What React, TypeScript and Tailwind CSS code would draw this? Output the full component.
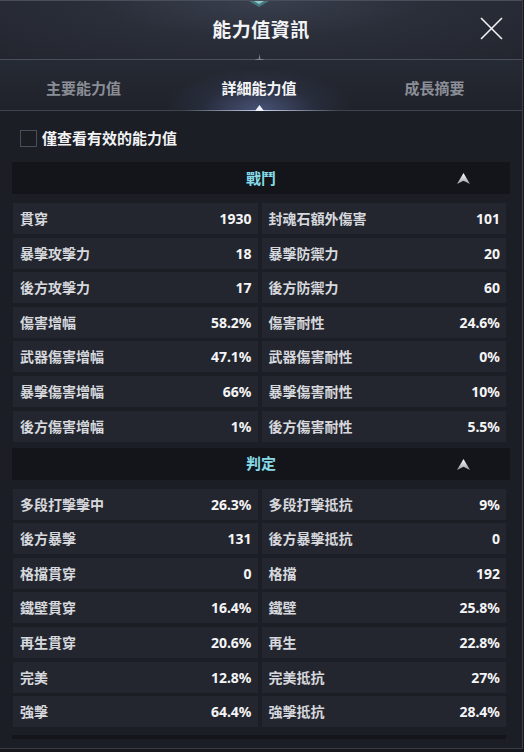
import React from "react";

const combat: [string, string, string, string][] = [
  ["貫穿", "1930", "封魂石額外傷害", "101"],
  ["暴擊攻擊力", "18", "暴擊防禦力", "20"],
  ["後方攻擊力", "17", "後方防禦力", "60"],
  ["傷害增幅", "58.2%", "傷害耐性", "24.6%"],
  ["武器傷害增幅", "47.1%", "武器傷害耐性", "0%"],
  ["暴擊傷害增幅", "66%", "暴擊傷害耐性", "10%"],
  ["後方傷害增幅", "1%", "後方傷害耐性", "5.5%"],
];

const judge: [string, string, string, string][] = [
  ["多段打擊擊中", "26.3%", "多段打擊抵抗", "9%"],
  ["後方暴擊", "131", "後方暴擊抵抗", "0"],
  ["格擋貫穿", "0", "格擋", "192"],
  ["鐵壁貫穿", "16.4%", "鐵壁", "25.8%"],
  ["再生貫穿", "20.6%", "再生", "22.8%"],
  ["完美", "12.8%", "完美抵抗", "27%"],
  ["強擊", "64.4%", "強擊抵抗", "28.4%"],
];

function CollapseArrow() {
  return (
    <svg width="13" height="11" viewBox="0 0 13 11">
      <defs>
        <linearGradient id="arr" x1="0" y1="0" x2="0" y2="1">
          <stop offset="0" stopColor="#ffffff" />
          <stop offset="1" stopColor="#9a9ea8" />
        </linearGradient>
      </defs>
      <path d="M6.5 0 L13 11 L6.5 7.8 L0 11 Z" fill="url(#arr)" />
    </svg>
  );
}

function StatCell({ label, value }: { label: string; value: string }) {
  return (
    <div className="h-[31px] bg-[#23262e] flex items-center justify-between pl-[7px] pr-[6px]">
      <span className="text-[14px] text-[#d6d8dd] font-semibold">{label}</span>
      <span className="text-[14px] text-[#f5f5f7] font-bold">{value}</span>
    </div>
  );
}

function Section({ title, rows }: { title: string; rows: [string, string, string, string][] }) {
  return (
    <>
      <div className="relative h-[32px] bg-[#13151b] flex items-center justify-center">
        <span className="text-[15px] font-bold text-[#86dbe6]">{title}</span>
        <div className="absolute left-[445px] top-[11px]">
          <CollapseArrow />
        </div>
      </div>
      <div className="mt-[9px] ml-[1px] w-[493px] grid grid-cols-2 gap-x-[4px] gap-y-[3.6px]">
        {rows.map((r) => (
          <React.Fragment key={r[0]}>
            <StatCell label={r[0]} value={r[1]} />
            <StatCell label={r[2]} value={r[3]} />
          </React.Fragment>
        ))}
      </div>
    </>
  );
}

export default function App() {
  return (
    <div
      className="w-[524px] h-[752px] overflow-hidden bg-[#15171c]"
      style={{ fontFamily: '"Noto Sans", "Noto Sans CJK TC", sans-serif' }}
    >
      <div className="w-[523px] h-[749px] bg-[#1c1e25] border-r border-b border-[#3a3d46] flex flex-col">
        {/* Header */}
        <div className="relative h-[59px] flex items-center justify-center bg-[radial-gradient(ellipse_at_50%_0%,#3a3f4e_0%,#2a2e39_45%,#23262f_100%)] border-t border-[#4a4e5a]">
          <svg className="absolute left-[249px] top-0" width="20" height="7" viewBox="0 0 20 7">
            <path d="M0 0 L20 0 L10 6 Z" fill="#4f9ea4" opacity="0.6" />
            <path d="M5 0 L15 0 L10 3 Z" fill="#9fe0dc" opacity="0.8" />
          </svg>
          <span className="text-[19px] font-bold text-[#f2f3f5] tracking-[0.5px]">能力值資訊</span>
          <svg className="absolute left-[480px] top-[16px]" width="23" height="23" viewBox="0 0 23 23">
            <path d="M1 1 L22 22 M22 1 L1 22" stroke="#f0f1f4" strokeWidth="1.6" />
          </svg>
        </div>
        {/* Separator */}
        <div className="relative h-[1px] bg-[#4b4f5b]">
          <svg className="absolute left-[254px] top-[-5px]" width="11" height="11" viewBox="0 0 11 11">
            <path d="M5.5 0 L6.3 4.7 L11 5.5 L6.3 6.3 L5.5 11 L4.7 6.3 L0 5.5 L4.7 4.7 Z" fill="#7d8290" />
          </svg>
        </div>
        {/* Tabs */}
        <div className="relative h-[50px] flex bg-[linear-gradient(180deg,#262a34_0%,#1f222a_100%)]">
          <div className="absolute left-[169px] top-[10px] w-[180px] h-[40px] bg-[radial-gradient(ellipse_at_50%_100%,rgba(120,140,210,0.45)_0%,rgba(80,95,150,0.15)_45%,transparent_75%)]" />
          <div className="relative w-[167px] flex items-center justify-center pt-[6px] text-[15px] font-bold text-[#8b8e96]">主要能力值</div>
          <div className="relative w-[184px] flex items-center justify-center pt-[6px] text-[15px] font-bold text-[#f4f5f8]">詳細能力值</div>
          <div className="relative w-[167px] flex items-center justify-center pt-[6px] text-[15px] font-bold text-[#8b8e96]">成長摘要</div>
        </div>
        <div className="relative h-[1px] bg-[linear-gradient(90deg,#3f434e_0%,#3f434e_35%,#c9d2f2_50%,#3f434e_65%,#3f434e_100%)]">
          <svg className="absolute left-[255px] top-[-5px]" width="9" height="6" viewBox="0 0 9 6">
            <path d="M4.5 0 L9 6 L0 6 Z" fill="#f2f4ff" />
          </svg>
        </div>
        {/* Content */}
        <div className="px-[12px]">
          <div className="h-[51px] flex items-center gap-[5px] pl-[8px] pt-[3px]">
            <div className="w-[17px] h-[17px] border border-[#4a4e58] bg-[#1a1d22]" />
            <span className="text-[15px] font-semibold text-[#f2f3f5]">僅查看有效的能力值</span>
          </div>
          <Section title="戰鬥" rows={combat} />
          <div className="h-[6px]" />
          <Section title="判定" rows={judge} />
          <div className="mt-[8px] h-[4px] w-[494px] bg-[#13151b]" />
        </div>
      </div>
    </div>
  );
}
